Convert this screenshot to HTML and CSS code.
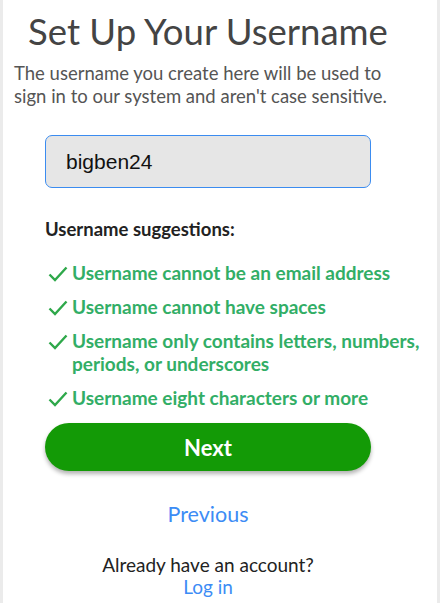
FILE: index.html
```html
<!DOCTYPE html>
<html lang="en">
<head>
<meta charset="utf-8">
<title>Set Up Your Username</title>
<link rel="stylesheet" href="styles.css">
</head>
<body>
<div class="page">
  <main class="content">
    <h1 class="title">Set Up Your Username</h1>
    <p class="intro">The username you create here will be used to sign in to our system and aren't case sensitive.</p>
    <div class="form">
      <input class="field" type="text" value="bigben24" aria-label="Username">
      <h2 class="sugg-title">Username suggestions:</h2>
      <ul class="rules">
        <li class="rule"><svg class="check" viewBox="0 0 20 16"><path d="M1.5 8.5 L7 14 L18.5 1.5"/></svg><span>Username cannot be an email address</span></li>
        <li class="rule"><svg class="check" viewBox="0 0 20 16"><path d="M1.5 8.5 L7 14 L18.5 1.5"/></svg><span>Username cannot have spaces</span></li>
        <li class="rule"><svg class="check" viewBox="0 0 20 16"><path d="M1.5 8.5 L7 14 L18.5 1.5"/></svg><span>Username only contains letters, numbers, periods, or underscores</span></li>
        <li class="rule"><svg class="check" viewBox="0 0 20 16"><path d="M1.5 8.5 L7 14 L18.5 1.5"/></svg><span>Username eight characters or more</span></li>
      </ul>
      <button class="next" type="button">Next</button>
      <a class="prev" href="#">Previous</a>
      <p class="account">Already have an account?<br><a class="login" href="#">Log in</a></p>
    </div>
  </main>
</div>
</body>
</html>
```

FILE: styles.css
```css
* { box-sizing: border-box; }
html, body { margin: 0; padding: 0; }
body {
  background: #ebebeb;
  font-family: Lato, "Open Sans", sans-serif;
  overflow: hidden;
}
.page {
  margin: 0 3px;
  background: #fff;
  height: 603px;
}
.content {
  width: 388px;
  margin-left: 11px;
  display: flex;
  flex-direction: column;
  align-items: center;
}
.title {
  margin: 10px 0 0;
  font-size: 36.5px;
  font-weight: 400;
  color: #444;
  line-height: 42px;
  text-align: center;
  white-space: nowrap;
}
.intro {
  margin: 10px 0 0;
  font-size: 18.5px;
  line-height: 23px;
  color: #555;
  align-self: stretch;
  width: 390px;
}
.form {
  width: 326px;
  display: flex;
  flex-direction: column;
  align-items: stretch;
}
.field {
  margin-top: 27px;
  height: 53px;
  border: 1.5px solid #3b8cf0;
  border-radius: 7px;
  background: #e6e6e6;
  font-family: "Liberation Sans", Arial, sans-serif;
  font-size: 21px;
  color: #111;
  padding: 0 20px;
  outline: none;
}
.sugg-title {
  margin: 30px 0 0;
  font-size: 18.5px;
  font-weight: 700;
  color: #222;
  line-height: 22px;
  white-space: nowrap;
}
.rules {
  list-style: none;
  margin: 21px 0 0;
  padding: 0;
  width: 390px;
  display: flex;
  flex-direction: column;
  gap: 11px;
}
.rule {
  display: flex;
  align-items: flex-start;
  gap: 4px;
  color: #32ae66;
  font-weight: 700;
  font-size: 19px;
  line-height: 23px;
}
.check {
  flex: none;
  width: 20px;
  height: 16px;
  margin: 5px 0 0 3px;
  fill: none;
  stroke: #2ea84a;
  stroke-width: 2.4;
}
.next {
  margin-top: 14px;
  height: 48px;
  border: none;
  border-radius: 24px;
  background: #139a06;
  color: #fff;
  font-family: Lato, sans-serif;
  font-weight: 700;
  font-size: 22px;
  box-shadow: 0 3px 4px rgba(0,0,0,0.3);
}
.prev {
  margin-top: 30px;
  align-self: center;
  color: #3c8cf5;
  text-decoration: none;
  font-size: 21.5px;
  line-height: 26px;
}
.account {
  margin: 27px 0 0;
  text-align: center;
  font-size: 19px;
  line-height: 22px;
  color: #222;
  white-space: nowrap;
}
.login {
  color: #3c8cf5;
  text-decoration: none;
}
```
